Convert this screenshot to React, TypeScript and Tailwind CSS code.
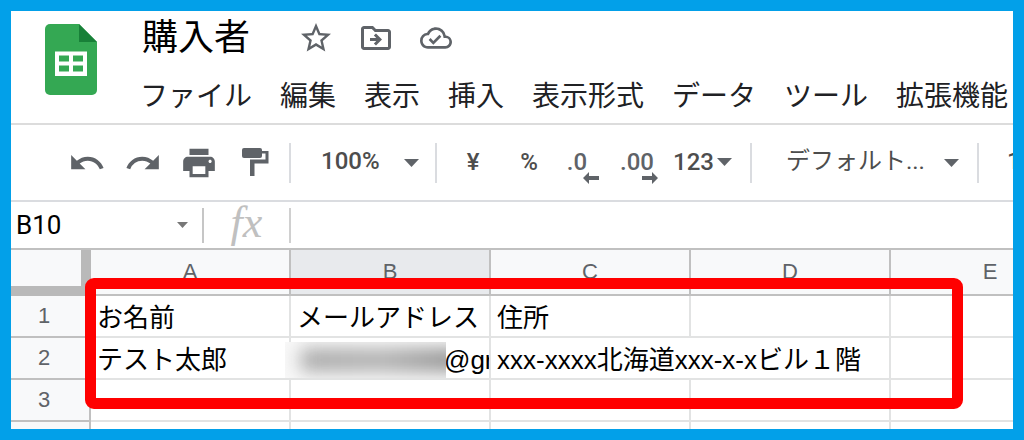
import { useState } from "react";
import type { ReactNode } from "react";
import {
  MdOutlineCloudDone,
  MdOutlineDriveFileMove,
  MdPrint,
  MdRedo,
  MdStarBorder,
  MdUndo,
} from "react-icons/md";

const menus = [
  "ファイル",
  "編集",
  "表示",
  "挿入",
  "表示形式",
  "データ",
  "ツール",
  "拡張機能",
];
const columns = ["A", "B", "C", "D", "E"];

const cjkFont = "font-['Noto_Sans_CJK_JP',sans-serif]";
const robotoFont = "font-['Roboto','Noto_Sans_CJK_JP',sans-serif]";
const toolClass = "flex h-10 w-14 shrink-0 items-center justify-center";
const selectClass = "absolute inset-x-0 appearance-none pb-1";
const columnHeadClass =
  "h-[46px] border-r-2 border-b-2 border-[#c0c0c0] p-0 text-center text-[22px] leading-6 font-normal text-[#5f6368]";
const rowHeadClass =
  "h-[42px] border-r-2 border-b-2 border-[#c0c0c0] bg-[#f8f9fa] py-0 pr-3 pl-0 text-center text-[22px] leading-6 font-normal text-[#5f6368]";
const cellClass =
  "h-[42px] border-r-2 border-b-2 border-[#e2e3e3] pt-1 pr-0 pb-0 pl-1.5 text-[26px] leading-8 whitespace-nowrap text-black";

function SheetsLogo() {
  return (
    <svg className="h-[71px] w-[52px] shrink-0" viewBox="0 0 52 71" aria-hidden="true">
      <path
        d="M5 0h29l18 18v48a5 5 0 0 1-5 5H5a5 5 0 0 1-5-5V5a5 5 0 0 1 5-5z"
        fill="#34a853"
      />
      <path d="M34 0l18 18H34z" fill="#188038" />
      <path
        d="M10 27.500h32V52H10zM14 31.500v6h10v-6zM28 31.500v6h10v-6zM14 41.500v6h10v-6zM28 41.500v6h10v-6z"
        fill="#fff"
        fillRule="evenodd"
      />
    </svg>
  );
}

function PaintRoller() {
  return (
    <svg className="h-[29px] w-[27px]" viewBox="0 0 27 29" fill="currentColor" aria-hidden="true">
      <rect width="20" height="10" rx="2" />
      <path d="M19 3h7.500v12.500H12.500V28h-4.500V11.500h15.500V5.500H19z" />
    </svg>
  );
}

function Caret({ small = false }: { small?: boolean }) {
  return (
    <svg
      className={
        small
          ? "pointer-events-none h-[6px] w-[11px] text-[#777777]"
          : "pointer-events-none h-2 w-[15px] text-[#5f6368]"
      }
      viewBox="0 0 16 8"
      preserveAspectRatio="none"
      fill="currentColor"
      aria-hidden="true"
    >
      <path d="M0 0h16l-8 8z" />
    </svg>
  );
}

function DecimalArrow({ right = false }: { right?: boolean }) {
  return (
    <svg
      className={`absolute -bottom-1.5 h-3 w-4 ${right ? "-right-1" : "-right-3"}`}
      viewBox="0 0 16 12"
      fill="currentColor"
      aria-hidden="true"
    >
      <path
        d={
          right
            ? "M0 4h10V0l6 6-6 6V8H0z"
            : "M16 4H6V0L0 6l6 6V8h10z"
        }
      />
    </svg>
  );
}

function Divider() {
  return <span className="h-10 w-0.5 shrink-0 bg-[#dadce0]" />;
}

function Tool({ label, children }: { label: string; children: ReactNode }) {
  return (
    <button type="button" aria-label={label} className={toolClass}>
      {children}
    </button>
  );
}

function Header() {
  return (
    <header className="flex h-[114px] shrink-0 border-b-2 border-[#dcdcdc] pt-[13px] pl-[34px]">
      <SheetsLogo />
      <div className="ml-8 min-w-0 pl-[11px]">
        <div className="-mt-1.5 flex h-10 items-center pl-0.5">
          <h1 className="pb-2 text-[36px] leading-10 text-black">購入者</h1>
          <div className="ml-12 flex items-center gap-6 text-[#5f6368]">
            <button type="button" aria-label="スター" className="w-9">
              <MdStarBorder size={36} />
            </button>
            <button type="button" aria-label="移動" className="w-9">
              <MdOutlineDriveFileMove size={36} />
            </button>
            <button type="button" aria-label="保存の状態" className="flex w-9 justify-center">
              <MdOutlineCloudDone size={32} />
            </button>
          </div>
        </div>
        <nav className="mt-4 flex gap-7 text-[28px] leading-10 whitespace-nowrap text-[#202124]">
          {menus.map((menu) => (
            <button key={menu} type="button">
              {menu}
            </button>
          ))}
        </nav>
      </div>
    </header>
  );
}

function Toolbar() {
  return (
    <div
      className={`${robotoFont} flex h-[77px] shrink-0 items-center overflow-hidden border-b-2 border-[#dadce0] pl-12 text-[24px] leading-8 font-medium text-[#4d4d4d]`}
    >
      <div className="flex text-[#5f6368]">
        <Tool label="元に戻す">
          <MdUndo size={38} />
        </Tool>
        <Tool label="やり直し">
          <MdRedo size={38} />
        </Tool>
        <Tool label="印刷">
          <MdPrint size={38} />
        </Tool>
        <Tool label="書式を貼り付け">
          <PaintRoller />
        </Tool>
      </div>
      <div className="ml-1.5 flex shrink-0 items-center">
        <Divider />
        <div className="relative mr-4 ml-[30px] flex w-[98px] items-center justify-end">
          <select aria-label="ズーム" className={selectClass}>
            <option>100%</option>
          </select>
          <Caret />
        </div>
        <Divider />
      </div>
      <div className="ml-2 flex shrink-0 items-center pb-0.5">
        <Tool label="通貨の表示形式">¥</Tool>
        <Tool label="パーセントの表示形式">%</Tool>
        <button type="button" className={`${toolClass} pr-4 text-[#5f6368]`}>
          <span className="relative">
            .0
            <DecimalArrow />
          </span>
        </button>
        <button type="button" className={`${toolClass} pr-2 text-[#5f6368]`}>
          <span className="relative">
            .00
            <DecimalArrow right />
          </span>
        </button>
        <button type="button" className="ml-1 flex items-center gap-[3px]">
          123
          <Caret />
        </button>
      </div>
      <div className="ml-[18px] flex shrink-0 items-center">
        <Divider />
        <div className="relative mr-[18px] ml-[34px] flex w-[173px] items-center justify-end">
          <select aria-label="フォント" className={`${selectClass} font-normal`}>
            <option>デフォルト...</option>
          </select>
          <Caret />
        </div>
        <Divider />
        <input aria-label="フォントサイズ" className="ml-7 w-8 pb-1" defaultValue="10" />
      </div>
    </div>
  );
}

function FormulaBar() {
  const [cell, setCell] = useState("B10");
  const [formula, setFormula] = useState("");

  return (
    <div className="flex h-[46px] shrink-0 items-center">
      <div className="relative flex w-[191px] shrink-0 items-center justify-end pr-[14px]">
        <input
          aria-label="名前ボックス"
          className={`${robotoFont} absolute left-0 w-40 pl-[5px] text-[26px] leading-8 text-black outline-none`}
          value={cell}
          onChange={(event) => setCell(event.target.value)}
        />
        <Caret small />
      </div>
      <span className="h-[35px] w-0.5 bg-[#c6c6c6]" />
      <label
        htmlFor="formula"
        className="w-[85px] pb-1 text-center font-['Liberation_Serif',serif] text-[44px] leading-9 text-[#c0c0c0] italic"
      >
        fx
      </label>
      <span className="h-[35px] w-0.5 bg-[#d0d0d0]" />
      <input
        id="formula"
        className="min-w-0 flex-1 px-2 text-[26px] outline-none"
        value={formula}
        onChange={(event) => setFormula(event.target.value)}
      />
    </div>
  );
}

function MaskedAddress() {
  return (
    <div className="relative -ml-1.5 h-9">
      <div className="overflow-hidden pl-[153px] leading-9">@gr</div>
      <div className="absolute inset-y-0 -left-1.5 w-[161px] overflow-hidden bg-[#f8f8f8]">
        <div className="absolute inset-y-[7px] -right-4 left-4 bg-linear-to-r from-[#a6a6a6] via-[#adadad] to-[#8c8c8c] blur-[9px]" />
      </div>
    </div>
  );
}

function Sheet() {
  return (
    <div className="relative min-h-0 flex-1 overflow-hidden border-t-2 border-[#c0c0c0]">
      <table className="w-[1080px] table-fixed border-separate border-spacing-0 font-['Liberation_Sans','Noto_Sans_CJK_JP',sans-serif]">
        <colgroup>
          <col className="w-20" />
          <col className="w-[200px]" />
          <col className="w-[200px]" />
          <col className="w-[200px]" />
          <col className="w-[200px]" />
          <col className="w-[200px]" />
        </colgroup>
        <thead>
          <tr>
            <td className="h-[46px] border-r-[10px] border-b-[10px] border-[#b9b9b9] bg-[#f8f9fa] p-0" />
            {columns.map((name) => (
              <th
                key={name}
                scope="col"
                className={`${columnHeadClass} ${name === "B" ? "bg-[#e8eaed]" : "bg-[#f8f9fa]"}`}
              >
                {name}
              </th>
            ))}
          </tr>
        </thead>
        <tbody>
          <tr>
            <th scope="row" className={rowHeadClass}>1</th>
            <td className={cellClass}>お名前</td>
            <td className={cellClass}>メールアドレス</td>
            <td className={cellClass}>住所</td>
            <td className={cellClass} />
            <td className={cellClass} />
          </tr>
          <tr>
            <th scope="row" className={rowHeadClass}>2</th>
            <td className={cellClass}>テスト太郎</td>
            <td className={cellClass}>
              <MaskedAddress />
            </td>
            {/* the address runs over the empty cell beside it */}
            <td className={cellClass} colSpan={2}>
              xxx-xxxx北海道xxx-x-xビル１階
            </td>
            <td className={cellClass} />
          </tr>
          {[3, 4].map((row) => (
            <tr key={row}>
              <th scope="row" className={rowHeadClass}>{row === 3 ? row : null}</th>
              {columns.map((name) => (
                <td key={name} className={cellClass} />
              ))}
            </tr>
          ))}
        </tbody>
      </table>
      <div className="pointer-events-none absolute top-[30px] left-[74px] h-[131px] w-[878px] rounded-[9px] border-[11px] border-[#ff0000] -mt-0.5" />
    </div>
  );
}

export default function App() {
  return (
    <main
      className={`${cjkFont} flex h-screen flex-col overflow-hidden border-[11px] border-[#02a0e9] bg-white`}
    >
      <Header />
      <Toolbar />
      <FormulaBar />
      <Sheet />
    </main>
  );
}
